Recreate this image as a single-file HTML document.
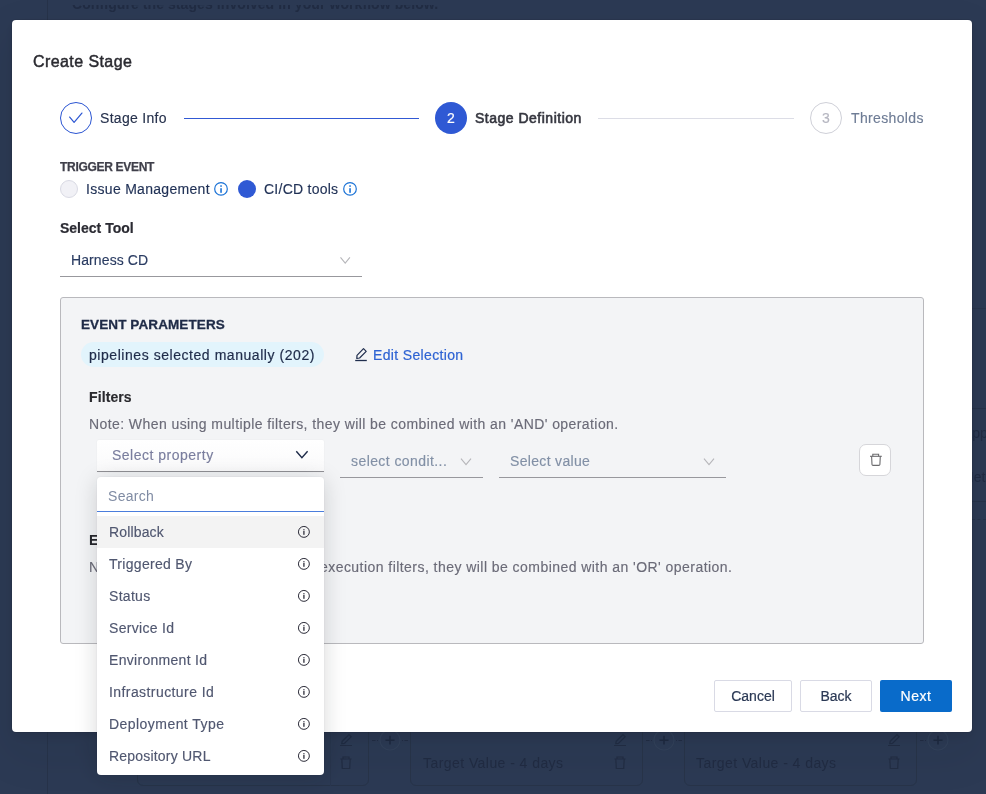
<!DOCTYPE html>
<html>
<head>
<meta charset="utf-8">
<style>
*{box-sizing:border-box;margin:0;padding:0}
html,body{width:986px;height:794px;overflow:hidden}
body{position:relative;background:#2c3a54;font-family:"Liberation Sans",sans-serif;}
#root{position:absolute;left:0;top:0;width:986px;height:794px;will-change:transform}
.a{position:absolute;white-space:nowrap}
.t14{font-size:14px;line-height:20px;height:20px;-webkit-text-stroke:.15px currentColor}
.bgt{color:#212c43}
#modal{position:absolute;left:12px;top:20px;width:960px;height:712px;background:#fff;border-radius:4px;overflow:hidden;box-shadow:0 0 0 1px rgba(16,22,26,.1),0 4px 8px rgba(16,22,26,.1),0 18px 46px 6px rgba(16,22,26,.07)}
.circ{position:absolute;width:32px;height:32px;border-radius:50%}
.hline{position:absolute;height:1px}
.radio{position:absolute;width:18px;height:18px;border-radius:50%}
.ul{position:absolute;height:1.2px;background:#98989d}
#box{position:absolute;left:48px;top:277px;width:864px;height:347px;background:#f3f4f6;border:1px solid #b9b9bd;border-radius:3px}
.btn{position:absolute;top:660px;height:32px;border-radius:2px;font-size:14px;line-height:30px;text-align:center;-webkit-text-stroke:.2px currentColor}
#menu{position:absolute;left:97px;top:477px;width:227px;height:298px;background:#fff;border-radius:4px;box-shadow:0 0 0 1px rgba(16,22,26,.02),0 3px 22px rgba(16,22,26,.17)}
.mi{position:absolute;left:0;width:227px;height:32px}
.mi span{position:absolute;left:12px;top:6px;font-size:14px;line-height:20px;color:#505770;letter-spacing:.3px;-webkit-text-stroke:.15px currentColor}
.mi svg{position:absolute;left:195px;top:4px}
.card{position:absolute;border:1px solid #283449;border-radius:6px}
</style>
</head>
<body>
<div id="root">
<!-- background page (dimmed) -->
<div class="a" style="left:47px;top:0;width:1px;height:794px;background:#27334a"></div>
<div class="a" style="left:0;top:5px;width:986px;height:15px;overflow:hidden">
  <div class="a bgt" style="left:72px;top:-11px;font-size:14px;line-height:20px;font-weight:700;letter-spacing:.08px">Configure the stages involved in your workflow below.</div>
</div>
<!-- right side bg -->
<div class="a" style="left:972px;top:308px;width:14px;height:1px;background:#29354c"></div>
<div class="a" style="left:972px;top:408px;width:14px;height:1px;background:#27334a"></div>
<div class="a" style="left:972px;top:501px;width:14px;height:1px;background:#27334a"></div>
<div class="a bgt" style="left:963px;top:423px;font-size:14px;line-height:20px">App</div>
<div class="a bgt" style="left:962px;top:467px;font-size:14px;line-height:20px">Met</div>
<div class="a" style="left:972px;top:519px;width:14px;height:0;border-top:1px dashed #27334a"></div>
<!-- bottom cards -->
<div class="card" style="left:137px;top:700px;width:232px;height:86px"></div>
<div class="a" style="left:330px;top:732px;width:1px;height:54px;background:#2a3750"></div>
<div class="card" style="left:410px;top:700px;width:233px;height:86px"></div>
<div class="card" style="left:684px;top:700px;width:233px;height:86px"></div>
<div class="a bgt" style="left:423px;top:753px;font-size:14px;line-height:20px;letter-spacing:.44px">Target Value - 4 days</div>
<div class="a bgt" style="left:696px;top:753px;font-size:14px;line-height:20px;letter-spacing:.44px">Target Value - 4 days</div>
<svg class="a" style="left:0;top:0" width="986" height="794" viewBox="0 0 986 794">
  <g fill="none" stroke="#222d44" stroke-width="1.2">
    <path d="M341.8 743.6 L342.2 741.2 L349 734.6 L351.2 736.8 L344.4 743.4 Z M340 745.5 H352"/>
    <path d="M340.5 759 H351.5 M343 759 V757 H349 V759 M341.8 759 L342.3 768.5 H349.7 L350.2 759"/>
    <path d="M615.8 743.6 L616.2 741.2 L623 734.6 L625.2 736.8 L618.4 743.4 Z M614 745.5 H626"/>
    <path d="M614.5 759 H625.5 M617 759 V757 H623 V759 M615.8 759 L616.3 768.5 H623.7 L624.2 759"/>
    <path d="M889.8 743.6 L890.2 741.2 L897 734.6 L899.2 736.8 L892.4 743.4 Z M888 745.5 H900"/>
    <path d="M888.5 759 H899.5 M891 759 V757 H897 V759 M889.8 759 L890.3 768.5 H897.7 L898.2 759"/>
    <circle cx="390" cy="740" r="10" stroke="#33415a"/>
    <circle cx="664" cy="740" r="10" stroke="#33415a"/>
    <circle cx="938" cy="740" r="10" stroke="#33415a"/>
    <path d="M385.5 740.3 H394.5 M390 735.7 V744.6 M659.5 740.3 H668.5 M664 735.7 V744.6 M933.5 740.3 H942.5 M938 735.7 V744.6" stroke-width="1.5" stroke="#1f2a40"/>
    <path d="M372 740.5 H375.5 M377 740.5 H378 M402 740.5 H403 M404.5 740.5 H408 M646 740.5 H649.5 M651 740.5 H652 M676 740.5 H677 M678.5 740.5 H682 M920 740.5 H923.5 M925 740.5 H926"/>
  </g>
</svg>

<div id="modal">
  <div class="a" style="left:21px;top:32px;font-size:16px;line-height:20px;color:#2a2a30;letter-spacing:.42px;-webkit-text-stroke:.45px #2a2a30">Create Stage</div>

  <!-- stepper -->
  <div class="circ" style="left:48px;top:82px;border:1.3px solid #2b55d2"></div>
  <svg class="a" style="left:57px;top:91px" width="14" height="14" viewBox="0 0 14 14"><path d="M0.7 6.1 L5.1 11.3 L12.9 2.1" fill="none" stroke="#2e58d3" stroke-width="1.25" stroke-linecap="round" stroke-linejoin="round"/></svg>
  <div class="a t14" style="left:88px;top:88px;color:#27324d;letter-spacing:.3px">Stage Info</div>
  <div class="hline" style="left:172px;top:98px;width:235px;background:#3159d4"></div>
  <div class="circ" style="left:423px;top:82px;background:#2f59d4"></div>
  <div class="a t14" style="left:423px;top:88px;width:32px;text-align:center;color:#fff;-webkit-text-stroke:.2px #fff">2</div>
  <div class="a t14" style="left:463px;top:88px;color:#35363f;letter-spacing:.5px;-webkit-text-stroke:.6px #35363f">Stage Definition</div>
  <div class="hline" style="left:586px;top:98px;width:196px;background:#dcdde6"></div>
  <div class="circ" style="left:798px;top:82px;border:1px solid #cfd0d8"></div>
  <div class="a t14" style="left:798px;top:88px;width:32px;text-align:center;color:#b5b6c0">3</div>
  <div class="a t14" style="left:839px;top:88px;color:#6e7c95;letter-spacing:.35px">Thresholds</div>

  <!-- trigger event -->
  <div class="a" style="left:48px;top:139px;font-size:12px;line-height:16px;font-weight:700;color:#3f3f4a;letter-spacing:-.3px;-webkit-text-stroke:.25px #3f3f4a">TRIGGER EVENT</div>
  <div class="radio" style="left:48px;top:160px;background:#f1f1f6;border:1px solid #d9dae4"></div>
  <div class="a t14" style="left:74px;top:159px;color:#1f3055;letter-spacing:.3px;-webkit-text-stroke:.15px #1f3055">Issue Management</div>
  <svg class="a" style="left:202px;top:162px" width="14" height="14" viewBox="0 0 14 14"><circle cx="7" cy="6.9" r="6.3" fill="none" stroke="#1a72d6" stroke-width="1.2"/><rect x="6.2" y="3.3" width="1.7" height="1.5" fill="#2a7cd9"/><rect x="6.2" y="6.2" width="1.7" height="4.6" fill="#2a7cd9"/></svg>
  <div class="radio" style="left:226px;top:160px;background:#2f59d4"></div>
  <div class="a t14" style="left:252px;top:159px;color:#1f3055;letter-spacing:.25px;-webkit-text-stroke:.15px #1f3055">CI/CD tools</div>
  <svg class="a" style="left:331px;top:162px" width="14" height="14" viewBox="0 0 14 14"><circle cx="7" cy="6.9" r="6.3" fill="none" stroke="#1a72d6" stroke-width="1.2"/><rect x="6.2" y="3.3" width="1.7" height="1.5" fill="#2a7cd9"/><rect x="6.2" y="6.2" width="1.7" height="4.6" fill="#2a7cd9"/></svg>

  <!-- select tool -->
  <div class="a t14" style="left:48px;top:198px;font-weight:700;color:#2b2b33;-webkit-text-stroke:.2px #2b2b33">Select Tool</div>
  <div class="a t14" style="left:59px;top:230px;color:#2a3c62;letter-spacing:.1px">Harness CD</div>
  <svg class="a" style="left:324px;top:232px" width="20" height="16" viewBox="0 0 20 16"><path d="M4.5 5.4 L9.2 11.2 L13.9 5.4" fill="none" stroke="#b6b6ba" stroke-width="1.1"/></svg>
  <div class="ul" style="left:48px;top:256px;width:302px;background:#98989d"></div>

  <!-- event box -->
  <div id="box"></div>
  <div class="a" style="left:69px;top:296px;font-size:13.5px;line-height:18px;font-weight:700;color:#1f2b47;letter-spacing:.1px;-webkit-text-stroke:.3px #1f2b47">EVENT PARAMETERS</div>
  <div class="a" style="left:69px;top:322px;width:243px;height:25px;border-radius:12.5px;background:#e2f4fc"></div>
  <div class="a t14" style="left:77px;top:325px;color:#1f2c4a;letter-spacing:.55px;-webkit-text-stroke:.2px #1f2c4a">pipelines selected manually (202)</div>
  <svg class="a" style="left:338px;top:323px" width="24" height="24" viewBox="0 0 24 24"><path d="M13.5 5.7 L16.2 8.4 L9.6 15 L6.8 15.4 L7 12.4 Z" fill="none" stroke="#1f2d4d" stroke-width="1.2" stroke-linejoin="round"/><path d="M5.2 17.5 H16.8" stroke="#1f2d4d" stroke-width="1.3"/></svg>
  <div class="a t14" style="left:361px;top:325px;color:#2e63d3;letter-spacing:.35px;-webkit-text-stroke:.2px #2e63d3">Edit Selection</div>
  <div class="a t14" style="left:77px;top:367px;font-weight:700;color:#2a2a2e;letter-spacing:.1px">Filters</div>
  <div class="a t14" style="left:77px;top:394px;color:#6b6b78;letter-spacing:.42px">Note: When using multiple filters, they will be combined with an 'AND' operation.</div>

  <div class="a" style="left:85px;top:420px;width:227px;height:32px;background:linear-gradient(#fff,#fafafb);border-bottom:1.3px solid #909095;border-radius:2px 2px 0 0;box-shadow:0 0 2px rgba(0,0,0,.06)"></div>
  <div class="a t14" style="left:100px;top:425px;color:#7a7e9e;letter-spacing:.5px">Select property</div>
  <svg class="a" style="left:278px;top:423px" width="24" height="24" viewBox="0 0 24 24"><path d="M6.3 8.2 L11.9 14.6 L17.6 8.2" fill="none" stroke="#1d2a48" stroke-width="1.4"/></svg>

  <div class="a t14" style="left:339px;top:431px;color:#8290a6;letter-spacing:.42px">select condit...</div>
  <svg class="a" style="left:444px;top:432px" width="20" height="20" viewBox="0 0 20 20"><path d="M5 6.6 L10 12.6 L15 6.6" fill="none" stroke="#b6b6ba" stroke-width="1.1"/></svg>
  <div class="ul" style="left:328px;top:457px;width:143px"></div>
  <div class="a t14" style="left:498px;top:431px;color:#8290a6;letter-spacing:.33px">Select value</div>
  <svg class="a" style="left:687px;top:432px" width="20" height="20" viewBox="0 0 20 20"><path d="M5 6.6 L10 12.6 L15 6.6" fill="none" stroke="#b6b6ba" stroke-width="1.1"/></svg>
  <div class="ul" style="left:487px;top:457px;width:227px"></div>

  <div class="a" style="left:847px;top:424px;width:32px;height:32px;background:#fff;border:1px solid #d6d6da;border-radius:7px"></div>
  <svg class="a" style="left:852px;top:428px" width="24" height="24" viewBox="0 0 24 24"><g fill="none" stroke="#6b6b6e" stroke-width="1.1"><path d="M6 8.3 H17.8"/><path d="M8.8 8.3 V6.3 H14.6 V8.3"/><path d="M7.6 8.3 L8 16.5 Q8.1 17.4 9 17.4 H14.9 Q15.8 17.4 15.9 16.5 L16.3 8.3"/></g></svg>

  <div class="a" style="left:77px;top:510px;font-size:14px;line-height:20px;font-weight:700;color:#25252b">Execution Filters</div>
  <div class="a t14" style="left:77px;top:537px;color:#6b6b78;letter-spacing:.42px">Note: When using multiple</div>
  <div class="a t14" style="left:308px;top:537px;color:#6b6b78;letter-spacing:.45px">execution filters, they will be combined with an 'OR' operation.</div>

  <!-- buttons -->
  <div class="btn" style="left:702px;width:78px;border:1px solid #d9dae5;color:#2b3955">Cancel</div>
  <div class="btn" style="left:788px;width:72px;border:1px solid #d9dae5;color:#2b3955">Back</div>
  <div class="btn" style="left:868px;width:72px;background:#096bca;color:#fff;line-height:32px;letter-spacing:.5px">Next</div>
</div>

<!-- dropdown menu -->
<div id="menu">
  <div class="a" style="left:11px;top:9px;font-size:14px;line-height:20px;color:#7f8ba3;letter-spacing:.3px">Search</div>
  <div class="a" style="left:0;top:33.5px;width:227px;height:1.2px;background:#4a7ddc"></div>
  <div class="mi" style="top:39px;background:#f3f3f3"><span style="letter-spacing:.15px">Rollback</span><svg width="24" height="24" viewBox="0 0 24 24"><circle cx="11.9" cy="11.9" r="5.45" fill="none" stroke="#2b2b38" stroke-width="1"/><rect x="11.15" y="9" width="1.5" height="1.2" fill="#6a6a74"/><rect x="11.15" y="10.8" width="1.5" height="4" fill="#4a4a55"/></svg></div>
  <div class="mi" style="top:71px"><span>Triggered By</span><svg width="24" height="24" viewBox="0 0 24 24"><circle cx="11.9" cy="11.9" r="5.45" fill="none" stroke="#2b2b38" stroke-width="1"/><rect x="11.15" y="9" width="1.5" height="1.2" fill="#6a6a74"/><rect x="11.15" y="10.8" width="1.5" height="4" fill="#4a4a55"/></svg></div>
  <div class="mi" style="top:103px"><span>Status</span><svg width="24" height="24" viewBox="0 0 24 24"><circle cx="11.9" cy="11.9" r="5.45" fill="none" stroke="#2b2b38" stroke-width="1"/><rect x="11.15" y="9" width="1.5" height="1.2" fill="#6a6a74"/><rect x="11.15" y="10.8" width="1.5" height="4" fill="#4a4a55"/></svg></div>
  <div class="mi" style="top:135px"><span>Service Id</span><svg width="24" height="24" viewBox="0 0 24 24"><circle cx="11.9" cy="11.9" r="5.45" fill="none" stroke="#2b2b38" stroke-width="1"/><rect x="11.15" y="9" width="1.5" height="1.2" fill="#6a6a74"/><rect x="11.15" y="10.8" width="1.5" height="4" fill="#4a4a55"/></svg></div>
  <div class="mi" style="top:167px"><span>Environment Id</span><svg width="24" height="24" viewBox="0 0 24 24"><circle cx="11.9" cy="11.9" r="5.45" fill="none" stroke="#2b2b38" stroke-width="1"/><rect x="11.15" y="9" width="1.5" height="1.2" fill="#6a6a74"/><rect x="11.15" y="10.8" width="1.5" height="4" fill="#4a4a55"/></svg></div>
  <div class="mi" style="top:199px"><span style="letter-spacing:.42px">Infrastructure Id</span><svg width="24" height="24" viewBox="0 0 24 24"><circle cx="11.9" cy="11.9" r="5.45" fill="none" stroke="#2b2b38" stroke-width="1"/><rect x="11.15" y="9" width="1.5" height="1.2" fill="#6a6a74"/><rect x="11.15" y="10.8" width="1.5" height="4" fill="#4a4a55"/></svg></div>
  <div class="mi" style="top:231px"><span style="letter-spacing:.45px">Deployment Type</span><svg width="24" height="24" viewBox="0 0 24 24"><circle cx="11.9" cy="11.9" r="5.45" fill="none" stroke="#2b2b38" stroke-width="1"/><rect x="11.15" y="9" width="1.5" height="1.2" fill="#6a6a74"/><rect x="11.15" y="10.8" width="1.5" height="4" fill="#4a4a55"/></svg></div>
  <div class="mi" style="top:263px"><span style="letter-spacing:.2px">Repository URL</span><svg width="24" height="24" viewBox="0 0 24 24"><circle cx="11.9" cy="11.9" r="5.45" fill="none" stroke="#2b2b38" stroke-width="1"/><rect x="11.15" y="9" width="1.5" height="1.2" fill="#6a6a74"/><rect x="11.15" y="10.8" width="1.5" height="4" fill="#4a4a55"/></svg></div>
</div>
</div>
</body>
</html>
